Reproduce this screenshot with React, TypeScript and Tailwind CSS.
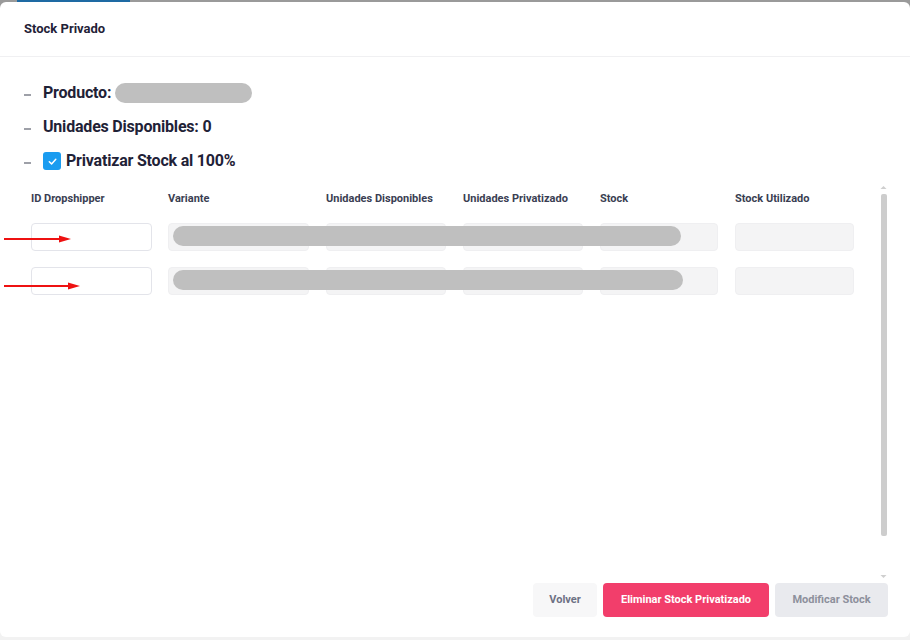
import React from "react";

const cols = ["ID Dropshipper", "Variante", "Unidades Disponibles", "Unidades Privatizado", "Stock", "Stock Utilizado"];

function Arrow({ width }: { width: number }) {
  return (
    <svg width={width} height="8" viewBox={`0 0 ${width} 8`} className="block">
      <line x1="0" y1="4" x2={width - 10} y2="4" stroke="#ee1111" strokeWidth="2.2" />
      <polygon points={`${width - 12},0.5 ${width},4 ${width - 12},7.5`} fill="#ee1111" />
    </svg>
  );
}

function Row({ barWidth, arrowWidth, arrowTop }: { barWidth: number; arrowWidth: number; arrowTop: number }) {
  return (
    <div className="relative grid grid-cols-[121px_142px_121px_121px_119px_119px] gap-x-[16px] h-[28px]">
      <div className="h-[28px] w-[121px] rounded-[4px] border border-[#e3e4ea] bg-white" />
      <div className="h-[28px] w-[141px] rounded-[4px] border border-[#efeff1] bg-[#f4f4f5]" />
      <div className="h-[28px] w-[120px] rounded-[4px] border border-[#efeff1] bg-[#f4f4f5]" />
      <div className="h-[28px] w-[120px] rounded-[4px] border border-[#efeff1] bg-[#f4f4f5]" />
      <div className="h-[28px] w-[118px] rounded-[4px] border border-[#efeff1] bg-[#f4f4f5]" />
      <div className="h-[28px] w-[119px] rounded-[4px] border border-[#efeff1] bg-[#f4f4f5]" />
      <div
        className="absolute left-[142px] top-[3px] h-[20px] rounded-full bg-[#bfbfbf]"
        style={{ width: barWidth }}
      />
      <div className="absolute left-[-27px]" style={{ top: arrowTop }}>
        <Arrow width={arrowWidth} />
      </div>
    </div>
  );
}

export default function App() {
  return (
    <div
      className="h-[640px] w-[910px] flex flex-col bg-[linear-gradient(#9a9a9a_0_20px,#f2f2f2_20px)] overflow-hidden"
      style={{ fontFamily: "Roboto, 'Liberation Sans', sans-serif" }}
    >
      <div className="h-[2px] relative shrink-0">
        <div className="absolute left-[17px] w-[113px] top-0 h-[2px] bg-[#1e6aa3]" />
      </div>
      <div className="flex-1 bg-white rounded-[6px] flex flex-col min-h-0">
        <div className="h-[55px] shrink-0 px-6 flex items-center border-b border-[#f0f0f2]">
          <span className="text-[13px] font-bold text-[#1f2237]">Stock Privado</span>
        </div>

        <div className="pl-6 pt-[25px] flex flex-col gap-[12px] text-[16px] font-bold text-[#1f2237]">
          <div className="flex items-center h-[22px]">
            <span className="w-[7px] h-[2px] bg-[#9ea0a8] mt-[4px] mr-[12px]" />
            <span className="tracking-[-0.2px]">Producto:</span>
            <span className="ml-[4px] w-[137px] h-[20px] rounded-full bg-[#bfbfbf]" />
          </div>
          <div className="flex items-center h-[22px]">
            <span className="w-[7px] h-[2px] bg-[#9ea0a8] mt-[4px] mr-[12px]" />
            <span className="tracking-[-0.2px]">Unidades Disponibles: 0</span>
          </div>
          <div className="flex items-center h-[22px]">
            <span className="w-[7px] h-[2px] bg-[#9ea0a8] mt-[4px] mr-[12px]" />
            <span className="w-[18px] h-[18px] rounded-[3px] bg-[#1a9cf0] flex items-center justify-center mr-[5px]">
              <svg width="11" height="11" viewBox="0 0 12 12">
                <path d="M2.5 6.2 L5 8.6 L9.6 3.6" fill="none" stroke="white" strokeWidth="1.6" strokeLinecap="round" strokeLinejoin="round" />
              </svg>
            </span>
            <span className="tracking-[-0.2px]">Privatizar Stock al 100%</span>
          </div>
        </div>

        <div className="flex flex-1 min-h-0 mt-[11px] pr-[23px]">
          <div className="flex-1 pl-[31px] pt-[8px]">
            <div className="grid grid-cols-[121px_142px_121px_121px_119px_119px] gap-x-[16px] text-[11px] font-bold text-[#3a3e52] h-[16px] items-center">
              {cols.map((c) => (
                <span key={c} className="whitespace-nowrap">{c}</span>
              ))}
            </div>
            <div className="mt-[16px] flex flex-col gap-[16px]">
              <Row barWidth={508} arrowWidth={67} arrowTop={12} />
              <Row barWidth={510} arrowWidth={76} arrowTop={15} />
            </div>
          </div>
          <div className="w-[7px] flex flex-col items-center pt-[2px] pb-[2px]">
            <svg width="7" height="5" viewBox="0 0 7 5"><polygon points="3.5,1 6.5,4 0.5,4" fill="#cfcfcf" /></svg>
            <div className="w-[6px] h-[342px] mt-[4px] rounded-[2px] bg-[#cdcdcd]" />
            <div className="flex-1" />
            <svg width="7" height="5" viewBox="0 0 7 5"><polygon points="0.5,1 6.5,1 3.5,4" fill="#cfcfcf" /></svg>
          </div>
        </div>

        <div className="flex justify-end gap-[6px] pr-[22px] pt-[2px] pb-[20px] text-[11px] font-bold">
          <button className="h-[34px] w-[64px] rounded-[4px] bg-[#f7f7f8] text-[#6d7184]">Volver</button>
          <button className="h-[34px] w-[166px] rounded-[4px] bg-[#f23e6b] text-white">Eliminar Stock Privatizado</button>
          <button className="h-[34px] w-[113px] rounded-[4px] bg-[#e9eaee] text-[#8d909c]">Modificar Stock</button>
        </div>
      </div>
      <div className="h-[3px] shrink-0" />
    </div>
  );
}
